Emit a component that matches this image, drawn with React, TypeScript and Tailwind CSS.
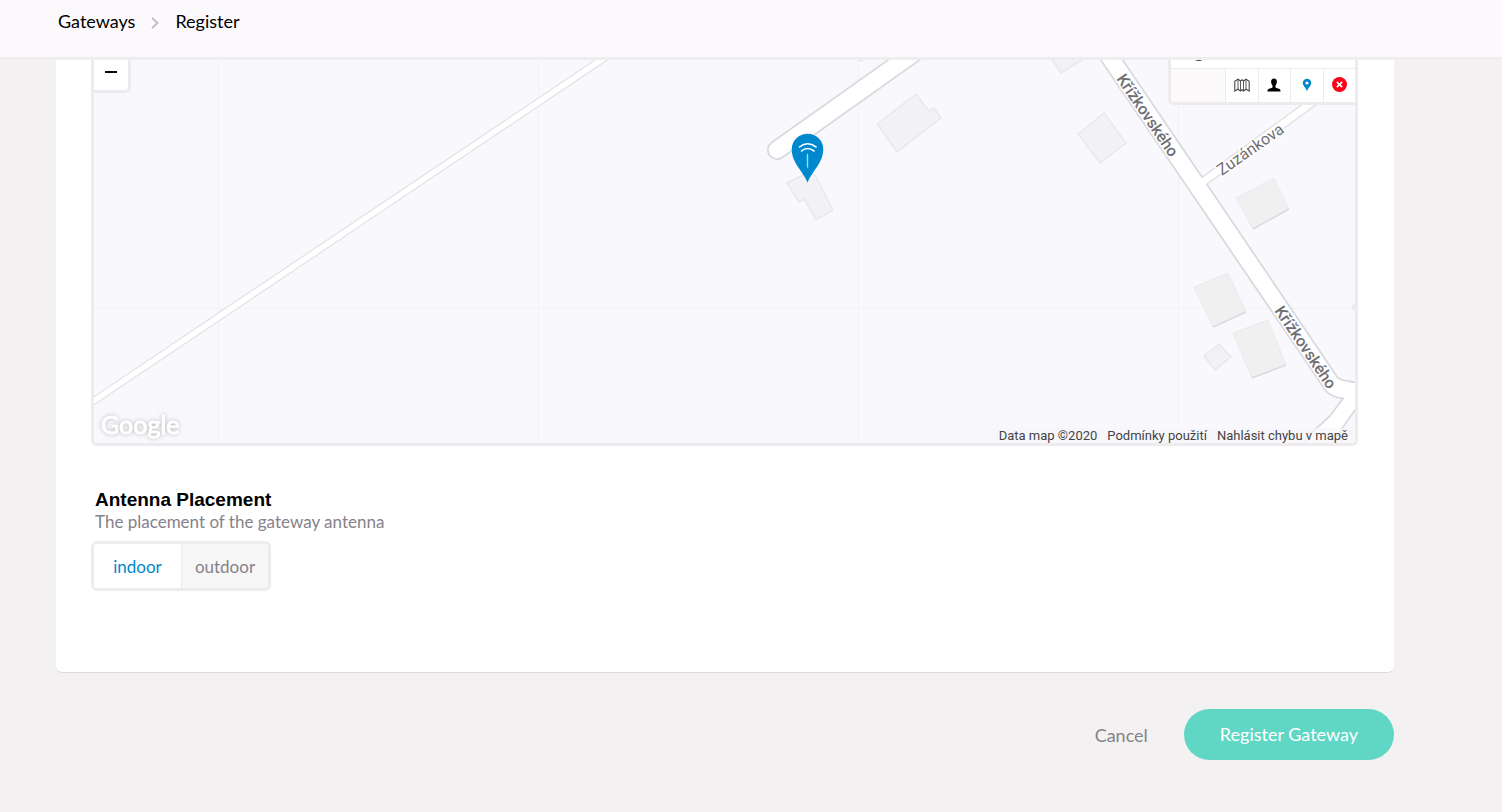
import { useState } from 'react';

const gridColumns = [218, 538, 858, 1178];

const buildings = [
  '877,124 916,94 929,111 934,108 941,118 897,152',
  '787,183 807,173 815,175 833,210 816,220 804,199 799,202',
  '1078,134 1104,113 1126,143 1100,163',
  '1204,356 1219,344 1231,357 1215,370',
  '1048,54 1061,73 1082,60 1078,54',
];

const tallBuildings = [
  { shape: '1236,198 1274,178 1289,209 1253,229', shade: '1289,209 1253,229' },
  { shape: '1194,287 1228,273 1246,312 1213,327', shade: '1246,312 1213,327' },
  { shape: '1233,333 1268,320 1286,365 1252,378', shade: '1286,365 1252,378' },
];

const streetLabels = [
  { name: 'Křížkovského', x: 1148, y: 115, angle: 55.6, weight: 500 },
  { name: 'Křížkovského', x: 1306, y: 347, angle: 55.6, weight: 500 },
  { name: 'Zuzánkova', x: 1250, y: 149, angle: -35, weight: 400 },
];

const placements = ['indoor', 'outdoor'];

function MapCanvas() {
  return (
    <svg
      viewBox="94 60 1261 383"
      preserveAspectRatio="xMidYMin slice"
      className="block h-[383px] w-full bg-[#f9f8fd]"
      role="img"
      aria-label="Gateway location"
    >
      {/* Tile seams */}
      <g stroke="#f3f2f6" strokeWidth="1">
        {gridColumns.map((x) => (
          <line key={x} x1={x + 0.5} y1="60" x2={x + 0.5} y2="443" />
        ))}
        <line x1="94" y1="308.5" x2="1355" y2="308.5" />
      </g>

      {/* Buildings */}
      <g fill="#f2f1f6" stroke="#e9e8ec" strokeWidth="1.5">
        {buildings.map((points) => (
          <polygon key={points} points={points} />
        ))}
        <circle cx="861" cy="59" r="2" />
        <circle cx="1356" cy="307" r="3" />
      </g>
      {tallBuildings.map(({ shape, shade }) => (
        <g key={shape}>
          <polygon points={shape} fill="#f1f0f1" stroke="#eae9ec" />
          <polyline points={shade} fill="none" stroke="#dcdbde" strokeWidth="1.5" />
        </g>
      ))}

      {/* Side roads */}
      <g fill="none">
        <path d="M84 407.500L616 50" stroke="#e3e2e5" strokeWidth="8" />
        <path d="M84 407.500L616 50" stroke="#fff" strokeWidth="5.500" />
        <path d="M1200 184L1350 75" stroke="#e3e2e5" strokeWidth="10" />
        <path d="M777 150L932 40" stroke="#dad9de" strokeWidth="20" strokeLinecap="round" />
        <path d="M777 150L932 40" stroke="#fff" strokeWidth="16.500" strokeLinecap="round" />
      </g>

      {/* Main road */}
      <path
        d="M1094 50L1326 391Q1331 397 1343 398.500L1330 416L1306 438V450H1327L1355 410L1365 400V383Q1345 382 1338 378L1116 50Z"
        fill="#fff"
        stroke="#dad9de"
        strokeWidth="1.800"
      />
      <path d="M1200 184L1350 75" stroke="#fff" strokeWidth="7" />

      {/* Street names */}
      <g fontFamily="Roboto, sans-serif" fontSize="16" fill="#6f6e73" textAnchor="middle">
        {streetLabels.map(({ name, x, y, angle, weight }) => (
          <text
            key={`${name}-${x}`}
            transform={`translate(${x} ${y}) rotate(${angle})`}
            y="6"
            fontWeight={weight}
            stroke="#fff"
            strokeWidth="3"
            strokeLinejoin="round"
            paintOrder="stroke"
          >
            {name}
          </text>
        ))}
      </g>

      {/* Gateway marker */}
      <path
        d="M807.500 182.500C803 171 791.700 163 791.700 149.500A15.800 15.800 0 0 1 823.300 149.500C823.300 163 812 171 807.500 182.500Z"
        fill="#0088cf"
      />
      <g fill="none" strokeLinecap="round">
        <path d="M799.500 147Q807.500 140.500 816 147" stroke="#fff" strokeWidth="1.600" />
        <path d="M801.500 151Q807.500 146 814 151" stroke="#fff" strokeWidth="1.600" />
        <path d="M807.500 154.500V167" stroke="#7fe9f5" strokeWidth="1.400" />
      </g>
    </svg>
  );
}

function MapIcon() {
  return (
    <svg viewBox="0 0 16 14" className="h-3.5 w-4" fill="none" stroke="#4a4a4a" strokeWidth="1.100">
      <path d="M.8 3.200L4 1.200L6.500 3L8 1.800L9.500 3L12 1.200L15.200 3.200V13L12 11.200L9.500 13L8 11.800L6.500 13L4 11.200L.8 13Z" />
      <path d="M4 1.200v10M6.500 3v10M9.500 3v10M12 1.200v10" strokeWidth="0.900" />
    </svg>
  );
}

function PersonIcon() {
  return (
    <svg viewBox="0 0 14 14" className="h-3.5 w-3.5">
      <path
        d="M7 .5C4.800.5 4 2 4.100 4c.1 1.600.7 2.700 1.400 3.500v1.800c-.3.900-2.500 1-4 1.800-.8.500-1 1.200-1 2.400h13c0-1.200-.2-1.900-1-2.400-1.500-.8-3.700-.9-4-1.800V7.500C9.200 6.700 9.800 5.600 9.900 4 10 2 9.200.5 7 .5z"
        fill="#000"
      />
    </svg>
  );
}

function PinIcon() {
  return (
    <svg viewBox="0 0 10 14" className="h-3.5 w-2.5">
      <path
        d="M5 .8A4.200 4.200 0 0 0 .8 5c0 3 3.200 4.500 4.200 8.500C6 9.500 9.200 8 9.200 5A4.200 4.200 0 0 0 5 .8zm0 2.600a1.600 1.600 0 1 1 0 3.200 1.600 1.600 0 0 1 0-3.200z"
        fill="#0088cf"
        fillRule="evenodd"
      />
    </svg>
  );
}

function ClearIcon() {
  return (
    <svg viewBox="0 0 14 14" className="size-[15px]">
      <circle cx="7" cy="7" r="7" fill="#fb0318" />
      <path d="M4.500 4.500l5 5M9.500 4.500l-5 5" stroke="#fff" strokeWidth="1.500" />
    </svg>
  );
}

const mapTools = [
  { label: 'Map', icon: <MapIcon /> },
  { label: 'My location', icon: <PersonIcon /> },
  { label: 'Marker', icon: <PinIcon /> },
  { label: 'Clear', icon: <ClearIcon /> },
];

export default function App() {
  const [placement, setPlacement] = useState('indoor');

  return (
    <div className="flex min-h-screen flex-col bg-[#f3f1f2] font-['Lato',sans-serif] text-lg leading-6">
      {/* Breadcrumbs */}
      <header className="border-b-3 border-[#efedee] bg-[#fbf9fb] pt-[9px] pr-[108px] pb-6 pl-[58px]">
        <nav aria-label="Breadcrumb" className="flex items-center text-black">
          <a href="#gateways">Gateways</a>
          <svg viewBox="0 0 8 12" className="mx-4 mt-1 h-3 w-2" fill="none" stroke="#bdbbbd" strokeWidth="1.800">
            <path d="M1 .8L6.500 6 1 11.200" />
          </svg>
          <a href="#register">Register</a>
        </nav>
      </header>

      <main className="mr-[108px] ml-14">
        <section className="rounded-b-md border-b border-[#dcdadb] bg-white px-9 pb-[81px]">
          {/* Location map */}
          <div className="relative -ml-px overflow-hidden rounded-b-md border-x-3 border-b-3 border-[#edebed]">
            <MapCanvas />

            <button
              aria-label="Zoom out"
              className="absolute top-0 left-0 flex h-[33px] w-[37px] justify-center rounded-br-md border-r-3 border-b-3 border-[#edebed] bg-white pt-[11px]"
            >
              <span className="h-0.5 w-3 bg-black" />
            </button>

            <div className="absolute top-0 right-0 w-[187px] overflow-hidden rounded-bl-md border-b-3 border-l-3 border-[#edebed] bg-white">
              <div className="flex h-2 items-end overflow-hidden px-1 text-[#444]">
                <span className="pb-[5px]">Lng</span>
              </div>
              <div className="flex h-[34px] border-t border-[#edebed] bg-[#fbf9fa]">
                <div className="ml-auto grid w-[130px] grid-cols-4">
                  {mapTools.map((tool) => (
                    <button
                      key={tool.label}
                      aria-label={tool.label}
                      className="flex items-center justify-center border-l border-[#edebed] bg-white pb-0.5"
                    >
                      {tool.icon}
                    </button>
                  ))}
                </div>
              </div>
            </div>

            <svg
              viewBox="0 0 88 34"
              className="absolute bottom-0 left-1.5 h-[34px] w-[88px] drop-shadow-[0_0_2px_#bbb]"
              role="img"
              aria-label="Google"
            >
              <text
                x="1"
                y="25"
                fontFamily="Lato, sans-serif"
                fontSize="25"
                fontWeight="400"
                fill="#fff"
                stroke="#fff"
                strokeWidth="1"
              >
                Google
              </text>
            </svg>

            <div className="absolute right-0 bottom-0 flex gap-2.5 bg-[#f7f6f9]/70 px-[7px] font-['Roboto',sans-serif] text-[13px] leading-[15px] text-[#444]">
              <span>Data map ©2020</span>
              <a href="#terms">Podmínky použití</a>
              <a href="#report">Nahlásit chybu v mapě</a>
            </div>
          </div>

          {/* Antenna placement */}
          <fieldset className="mt-[42px] -ml-px">
            <legend className="px-1 font-['Liberation_Sans',Arial,sans-serif] text-[19px] font-bold text-black">
              Antenna Placement
            </legend>
            <p className="-mt-0.5 px-1 text-[17px] text-[#85828a]">The placement of the gateway antenna</p>
            <div className="mt-[7px] inline-grid h-[50px] w-[180px] grid-cols-2 overflow-hidden rounded-md border-3 border-[#edebed]">
              {placements.map((option) => (
                <label
                  key={option}
                  className="flex cursor-pointer items-center justify-center bg-[#f7f7f7] pt-0.5 text-[17px] text-[#85828a] not-first:border-l not-first:border-[#edebed] has-checked:bg-white has-checked:text-[#0088cf]"
                >
                  <input
                    type="radio"
                    name="placement"
                    value={option}
                    checked={placement === option}
                    onChange={() => setPlacement(option)}
                    className="sr-only"
                  />
                  {option}
                </label>
              ))}
            </div>
          </fieldset>
        </section>

        {/* Form actions */}
        <div className="mt-9 flex items-center justify-end gap-9">
          <button className="text-[#85828a]">Cancel</button>
          <button className="rounded-full bg-[#60d7c5] px-9 py-[13px] leading-[25px] text-white">
            Register Gateway
          </button>
        </div>
      </main>
    </div>
  );
}
